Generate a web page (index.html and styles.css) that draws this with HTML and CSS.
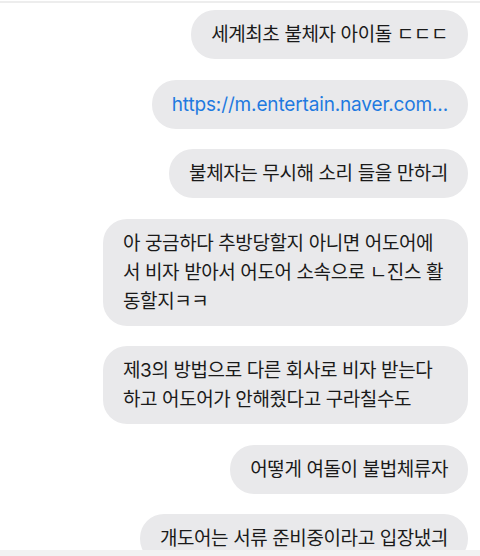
FILE: index.html
```html
<!DOCTYPE html>
<html lang="ko">
<head>
    <meta charset="UTF-8">
    <title>Messages</title>
    <meta name="viewport" content="width=device-width, initial-scale=1.0">
    <link rel="stylesheet" href="styles.css">
</head>
<body>
    <main class="screen">
        <div class="top-line"></div>
        <section class="chat">
            <div class="bubble">세계최초 불체자 아이돌 ㄷㄷㄷ</div>
            <div class="bubble link">https://m.entertain.naver.com...</div>
            <div class="bubble">불체자는 무시해 소리 들을 만하긔</div>
            <div class="bubble">아 궁금하다 추방당할지 아니면 어도어에서 비자 받아서 어도어 소속으로 ㄴ진스 활동할지ㅋㅋ</div>
            <div class="bubble">제3의 방법으로 다른 회사로 비자 받는다 하고 어도어가 안해줬다고 구라칠수도</div>
            <div class="bubble">어떻게 여돌이 불법체류자</div>
            <div class="bubble">개도어는 서류 준비중이라고 입장냈긔</div>
        </section>
        <div class="bottom-bar"></div>
    </main>
</body>
</html>
```

FILE: styles.css
```css
body {
    margin: 0;
    background: #fff;
    font-family: "Inter", "Noto Sans CJK KR", sans-serif;
}

.screen {
    height: 556px;
    display: flex;
    flex-direction: column;
    overflow: hidden;
}

.top-line {
    height: 2px;
    margin-top: 1px;
    background: #ededed;
    flex: none;
}

.chat {
    flex: 1;
    min-height: 0;
    overflow: hidden;
    display: flex;
    flex-direction: column;
    align-items: flex-end;
    gap: 20.5px;
    padding: 7px 12px 0 0;
}

.bubble {
    flex: none;
    max-width: 325px;
    padding: 10px 20px;
    border-radius: 24px;
    background: #e9e9eb;
    color: #1a1a1a;
    font-size: 19px;
    line-height: 29px;
    letter-spacing: -0.4px;
}

.link {
    color: #1f7ae0;
    letter-spacing: -0.15px;
    white-space: nowrap;
}

.bottom-bar {
    height: 6px;
    flex: none;
    background: #f2f2f2;
}
```
